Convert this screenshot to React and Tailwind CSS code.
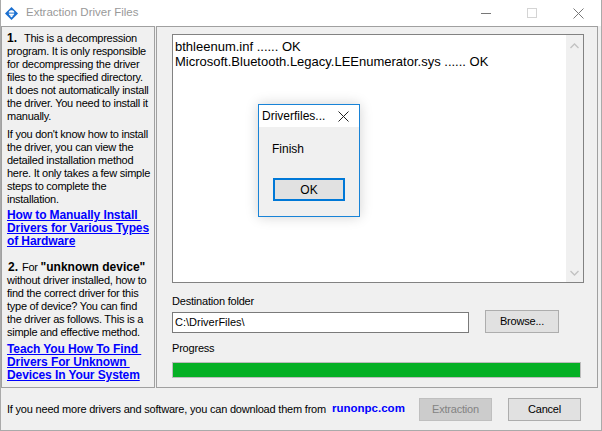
import React from 'react';

// text lines of the help panel, wrapped as in the original dialog
const introLines = [
  'program. It is only responsible',
  'for decompressing the driver',
  'files to the specified directory.',
  'It does not automatically install',
  'the driver. You need to install it',
  'manually.',
];

const helpLines = [
  "If you don't know how to install",
  'the driver, you can view the',
  'detailed installation method',
  'here. It only takes a few simple',
  'steps to complete the',
  'installation.',
];

const manualLinks = ['How to Manually Install ', 'Drivers for Various Types', 'of Hardware'];

const unknownLines = [
  'without driver installed, how to',
  'find the correct driver for this',
  'type of device? You can find',
  'the driver as follows. This is a',
  'simple and effective method.',
];

const unknownLinks = ['Teach You How To Find ', 'Drivers For Unknown ', 'Devices In Your System'];

const log = ['bthleenum.inf ...... OK', 'Microsoft.Bluetooth.Legacy.LEEnumerator.sys ...... OK'];

const Line = ({ children }) => <div className="h-[13px] leading-[13px] whitespace-pre">{children}</div>;

const LinkLine = ({ children }) => (
  <div className="h-[13px] leading-[13px] whitespace-pre">
    <span className="text-[12px] font-bold tracking-[-0.1px] text-[#0000ff] underline underline-offset-[1px]">{children}</span>
  </div>
);

const AppIcon = () => (
  <svg width="13" height="13" viewBox="0 0 13 13">
    <polygon points="6.5,0 13,6.5 6.5,13 0,6.5" fill="#1a6fd0" />
    <circle cx="6.5" cy="6" r="2.8" fill="#fff" />
    <rect x="3" y="5.6" width="7" height="1" fill="#1a6fd0" />
    <polygon points="4.6,8.4 8.4,8.4 6.5,10.4" fill="#fff" />
  </svg>
);

const Chevron = ({ down }) => (
  <svg width="9" height="6" viewBox="0 0 9 6">
    <polyline
      points={down ? '0.5,1 4.5,5 8.5,1' : '0.5,5 4.5,1 8.5,5'}
      fill="none"
      stroke="#c2c2c2"
      strokeWidth="1.3"
    />
  </svg>
);

export default function App() {
  return (
    <div className="relative w-[602px] h-[431px] bg-[#f0f0f0] border-x border-b border-[#aaaaaa] flex flex-col font-['Liberation_Sans',Arial,sans-serif] text-black overflow-hidden">
      {/* title bar */}
      <div className="h-[26px] bg-white flex items-center pl-[4px]">
        <AppIcon />
        <span className="ml-[8px] text-[11.5px] text-[#999999]">Extraction Driver Files</span>
        <div className="ml-auto flex h-full">
          <div className="w-[46px] flex items-center justify-center">
            <div className="w-[10px] h-px bg-[#777777]" />
          </div>
          <div className="w-[46px] flex items-center justify-center">
            <div className="w-[10px] h-[10px] border border-[#d4d4d4]" />
          </div>
          <div className="w-[46px] flex items-center justify-center">
            <svg width="11" height="11" viewBox="0 0 11 11">
              <path d="M0.5 0.5 L10.5 10.5 M10.5 0.5 L0.5 10.5" stroke="#777777" strokeWidth="1" />
            </svg>
          </div>
        </div>
      </div>

      {/* panels */}
      <div className="flex gap-px">
        <div className="w-[154px] h-[362px] border border-[#a0a0a0] pl-[5px] pt-[5px] text-[11px] tracking-[-0.25px]">
          <Line>
            <b className="text-[12px] tracking-normal">1.</b>
            <span className="ml-[7px]">This is a decompression</span>
          </Line>
          {introLines.map((t) => (
            <Line key={t}>{t}</Line>
          ))}
          <div className="mt-[5px]">
            {helpLines.map((t) => (
              <Line key={t}>{t}</Line>
            ))}
          </div>
          <div className="mt-[3px]">
            {manualLinks.map((t) => (
              <LinkLine key={t}>{t}</LinkLine>
            ))}
          </div>
          <div className="mt-[13px]">
            <Line>
              <b className="text-[12px] tracking-normal ml-px">2.</b>
              <span className="ml-[4px]">For </span>
              <b className="text-[12px] tracking-normal">"unknown device"</b>
            </Line>
            {unknownLines.map((t) => (
              <Line key={t}>{t}</Line>
            ))}
          </div>
          <div className="mt-[4px]">
            {unknownLinks.map((t) => (
              <LinkLine key={t}>{t}</LinkLine>
            ))}
          </div>
        </div>

        <div className="w-[442px] h-[362px] border border-[#a0a0a0] pl-[15px] pt-[7px] text-[11px]">
          <div className="w-[412px] h-[249px] border border-[#828282] bg-white flex">
            <div className="flex-1 pl-[2px] pt-[4px] text-[13px] leading-[15px]">
              {log.map((t) => (
                <div key={t} className="whitespace-pre">{t}</div>
              ))}
            </div>
            <div className="w-[17px] bg-[#f0f0f0] flex flex-col items-center justify-between pt-[8px] pb-[6px]">
              <Chevron />
              <Chevron down />
            </div>
          </div>

          <div className="mt-[12px] h-[13px] leading-[13px] tracking-[-0.2px]">Destination folder</div>
          <div className="mt-[2px] h-[23px] flex items-end">
            <div className="w-[297px] h-[21px] border border-[#7a7a7a] bg-white pl-[2px] leading-[19px]">C:\DriverFiles\</div>
            <button className="ml-[16px] w-[74px] h-[23px] border border-[#adadad] bg-[#e1e1e1] tracking-[-0.2px]">
              Browse...
            </button>
          </div>

          <div className="mt-[9px] h-[13px] leading-[13px] tracking-[-0.2px]">Progress</div>
          <div className="mt-[7px] w-[409px] h-[16px] border border-[#bcbcbc] bg-[#e6e6e6]">
            <div className="h-full w-full bg-[#06b025]" />
          </div>
        </div>
      </div>

      {/* footer */}
      <div className="flex-1 flex items-center pl-[6px] pr-[20px] text-[11px]">
        <span className="tracking-[-0.2px]">If you need more drivers and software, you can download them from</span>
        <span className="ml-[6px] text-[11.5px] font-bold text-[#0000ff]">runonpc.com</span>
        <div className="ml-auto flex gap-[16px]">
          <button className="w-[73px] h-[23px] border border-[#bfbfbf] bg-[#cccccc] text-[#838383] tracking-[-0.2px]">
            Extraction
          </button>
          <button className="w-[73px] h-[23px] border border-[#adadad] bg-[#e1e1e1] tracking-[-0.2px]">Cancel</button>
        </div>
      </div>

      {/* message box on top */}
      <div className="absolute left-[257px] top-[104px] w-[102px] h-[113px] border border-[#1883d7] bg-[#f0f0f0] shadow-[0_0_12px_rgba(0,0,0,0.18)] flex flex-col">
        <div className="h-[22px] bg-white flex items-center pl-[3px] pr-[10px] text-[12px]">
          <span>Driverfiles...</span>
          <svg className="ml-auto" width="11" height="11" viewBox="0 0 11 11">
            <path d="M0.5 0.5 L10.5 10.5 M10.5 0.5 L0.5 10.5" stroke="#222222" strokeWidth="1" />
          </svg>
        </div>
        <div className="pl-[13px] pt-[15px] text-[12px] leading-[14px]">Finish</div>
        <button className="mt-[22px] ml-[14px] w-[72px] h-[23px] border-2 border-[#0078d7] bg-[#e1e1e1] text-[12px]">
          OK
        </button>
      </div>
    </div>
  );
}
